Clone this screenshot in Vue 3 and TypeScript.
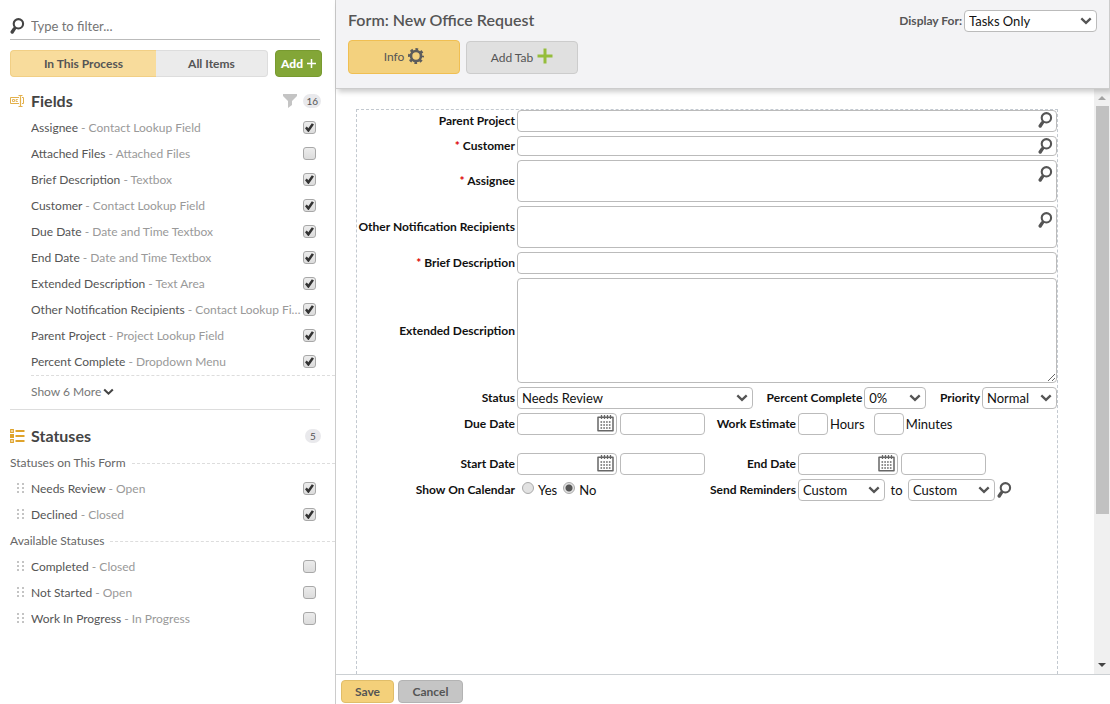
<script setup lang="ts">
import { ref, reactive } from 'vue'
import { h, type FunctionalComponent } from 'vue'

interface Item {
  name: string
  kind: string
  checked: boolean
}

const fields = reactive<Item[]>([
  { name: 'Assignee', kind: 'Contact Lookup Field', checked: true },
  { name: 'Attached Files', kind: 'Attached Files', checked: false },
  { name: 'Brief Description', kind: 'Textbox', checked: true },
  { name: 'Customer', kind: 'Contact Lookup Field', checked: true },
  { name: 'Due Date', kind: 'Date and Time Textbox', checked: true },
  { name: 'End Date', kind: 'Date and Time Textbox', checked: true },
  { name: 'Extended Description', kind: 'Text Area', checked: true },
  { name: 'Other Notification Recipients', kind: 'Contact Lookup Field', checked: true },
  { name: 'Parent Project', kind: 'Project Lookup Field', checked: true },
  { name: 'Percent Complete', kind: 'Dropdown Menu', checked: true },
])

const statusGroups = reactive<{ title: string; items: Item[] }[]>([
  {
    title: 'Statuses on This Form',
    items: [
      { name: 'Needs Review', kind: 'Open', checked: true },
      { name: 'Declined', kind: 'Closed', checked: true },
    ],
  },
  {
    title: 'Available Statuses',
    items: [
      { name: 'Completed', kind: 'Closed', checked: false },
      { name: 'Not Started', kind: 'Open', checked: false },
      { name: 'Work In Progress', kind: 'In Progress', checked: false },
    ],
  },
])

const filter = ref('')
const showOnCalendar = ref('no')

const Magnifier: FunctionalComponent = () =>
  h('svg', { width: 15, height: 16, viewBox: '0 0 15 16', fill: 'none', stroke: 'currentColor', 'aria-hidden': 'true' }, [
    h('circle', { cx: 8.4, cy: 5.8, r: 4.7, 'stroke-width': 2.1 }),
    h('path', { d: 'M5.4 9.4 4.2 10.9', 'stroke-width': 2.4 }),
    h('path', { d: 'M4.1 11.1 2.2 14', 'stroke-width': 3.4, 'stroke-linecap': 'round' }),
  ])

const Chevron: FunctionalComponent = () =>
  h('svg', { width: 12, height: 8, viewBox: '0 0 12 8', fill: 'none', stroke: 'currentColor', 'stroke-width': 2.3, 'aria-hidden': 'true' }, [
    h('path', { d: 'M1.3 1.3 6 5.8 10.7 1.3' }),
  ])

const Calendar: FunctionalComponent = () =>
  h('svg', { width: 17, height: 17, viewBox: '0 0 17 17', fill: 'none', stroke: 'currentColor', 'aria-hidden': 'true' }, [
    h('path', { d: 'M1 2.2H16V15.8H1Z', 'stroke-width': 1.5, 'stroke-linejoin': 'round' }),
    h('path', { d: 'M4.5 0V4M7.5 0V4M10.5 0V4M13.5 0V4', 'stroke-width': 1.3 }),
    h('path', { d: 'M3.5 7H14M3.5 10H14M3.5 13H14', 'stroke-width': 1.6, 'stroke-dasharray': '1.6 1.2' }),
  ])
</script>

<template>
  <div class="page">
    <aside class="side">
      <label class="search">
        <Magnifier />
        <input v-model="filter" type="text" placeholder="Type to filter..." aria-label="Type to filter" />
      </label>

      <div class="scope">
        <div class="segments">
          <button type="button" class="seg on">In This Process</button>
          <button type="button" class="seg">All Items</button>
        </div>
        <button type="button" class="add">
          Add
          <svg width="9" height="9" viewBox="0 0 9 9" stroke="#fff" stroke-width="1.5" aria-hidden="true"><path d="M4.5 0V9M0 4.5H9" /></svg>
        </button>
      </div>

      <section class="group fields">
        <header class="head">
          <svg class="headicon" width="15" height="12" viewBox="0 0 15 12" fill="none" stroke="#e3b04b" aria-hidden="true">
            <path d="M9 2.5H.5V8.5H9M12 2.5H13.5V8.5H12" />
            <path d="M8.5 .5H10L10.5 1 11 .5H12.5M10.5 1V11M8.5 11.5H10L10.5 11 11 11.5H12.5" stroke-width="1.2" />
            <path d="M2.5 4.5H4.5V6.5H2.5ZM7.8 4.5H6V6.5H7.8" stroke-width=".9" />
          </svg>
          <h2>Fields</h2>
          <svg class="funnel" width="14" height="14" viewBox="0 0 14 14" fill="#c4c4c4" aria-hidden="true"><path d="M0 0H14V2L9 7V11L5 14V7L0 2Z" /></svg>
          <span class="count">16</span>
        </header>
        <ul class="list">
          <li v-for="f in fields" :key="f.name">
            <label class="item">
              <span class="text"><b>{{ f.name }}</b> - {{ f.kind }}</span>
              <input v-model="f.checked" type="checkbox" />
            </label>
          </li>
        </ul>
        <button type="button" class="more">Show 6 More <Chevron /></button>
      </section>

      <section class="group">
        <header class="head statuses">
          <svg class="headicon" width="15" height="14" viewBox="0 0 15 14" fill="none" stroke="#dfa32b" aria-hidden="true">
            <path d="M.7 .7H3.3V3.3H.7ZM.7 10.7H3.3V13.3H.7Z" stroke-width="1.2" />
            <path d="M0 5H4V9H0Z" fill="#dfa32b" stroke="none" />
            <path d="M5.5 2H14.5M5.5 7H14.5M5.5 12H14.5" stroke-width="1.8" />
          </svg>
          <h2>Statuses</h2>
          <span class="count">5</span>
        </header>
        <template v-for="g in statusGroups" :key="g.title">
          <h3 class="sub">{{ g.title }}</h3>
          <ul class="list drag">
            <li v-for="s in g.items" :key="s.name">
              <svg class="grip" width="8" height="11" viewBox="0 0 8 11" fill="#c4c4c4" aria-hidden="true">
                <path d="M0 0H2V2H0ZM5 0H7V2H5ZM0 4H2V6H0ZM5 4H7V6H5ZM0 8H2V10H0ZM5 8H7V10H5Z" />
              </svg>
              <label class="item">
                <span class="text"><b>{{ s.name }}</b> - {{ s.kind }}</span>
                <input v-model="s.checked" type="checkbox" />
              </label>
            </li>
          </ul>
        </template>
      </section>
    </aside>

    <main class="main">
      <header class="top">
        <div class="topline">
          <h1>Form: New Office Request</h1>
          <label class="display" for="display-for">Display For:</label>
          <span class="select w-display">
            <select id="display-for"><option>Tasks Only</option></select><Chevron />
          </span>
        </div>
        <nav class="tabs">
          <button type="button" class="tab active">
            Info
            <svg width="16" height="16" viewBox="0 0 16 16" fill="none" stroke="#5c5c5c" aria-hidden="true">
              <circle cx="8" cy="8" r="6.5" stroke-width="3" stroke-dasharray="2.6 2.505" stroke-dashoffset="1.3" />
              <circle cx="8" cy="8" r="5" stroke-width="2.6" />
            </svg>
          </button>
          <button type="button" class="tab">
            Add Tab
            <svg width="16" height="16" viewBox="0 0 16 16" stroke="#95bd3c" stroke-width="3" aria-hidden="true"><path d="M8 .5V15.5M.5 8H15.5" /></svg>
          </button>
        </nav>
      </header>

      <div class="work">
        <form id="request" class="canvas" @submit.prevent>
          <div class="row">
            <label for="parent">Parent Project</label>
            <div class="lookup"><input id="parent" type="text" /><Magnifier /></div>
          </div>
          <div class="row">
            <label for="customer"><i>*</i> Customer</label>
            <div class="lookup short"><input id="customer" type="text" /><Magnifier /></div>
          </div>
          <div class="row">
            <label for="assignee"><i>*</i> Assignee</label>
            <div class="lookup tall"><textarea id="assignee"></textarea><Magnifier /></div>
          </div>
          <div class="row">
            <label for="others">Other Notification Recipients</label>
            <div class="lookup tall"><textarea id="others"></textarea><Magnifier /></div>
          </div>
          <div class="row">
            <label for="brief"><i>*</i> Brief Description</label>
            <input id="brief" type="text" />
          </div>
          <div class="row">
            <label for="extended">Extended Description</label>
            <textarea id="extended" class="big"></textarea>
          </div>
          <div class="row">
            <label for="status">Status</label>
            <div class="line spread">
              <span class="select w-status"><select id="status"><option>Needs Review</option></select><Chevron /></span>
              <span class="pair">
                <label for="percent">Percent Complete</label>
                <span class="select w-percent"><select id="percent"><option>0%</option></select><Chevron /></span>
              </span>
              <span class="pair">
                <label for="priority">Priority</label>
                <span class="select w-priority"><select id="priority"><option>Normal</option></select><Chevron /></span>
              </span>
            </div>
          </div>
          <div class="row">
            <label for="due">Due Date</label>
            <div class="line">
              <span class="date"><input id="due" type="text" /><Calendar /></span>
              <input class="time" type="text" aria-label="Due time" />
              <label class="mid" for="hours">Work Estimate</label>
              <span class="unit"><input id="hours" type="text" /><label for="hours">Hours</label></span>
              <span class="unit"><input id="minutes" type="text" /><label for="minutes">Minutes</label></span>
            </div>
          </div>
          <div class="row apart">
            <label for="start">Start Date</label>
            <div class="line">
              <span class="date"><input id="start" type="text" /><Calendar /></span>
              <input class="time" type="text" aria-label="Start time" />
              <label class="mid" for="end">End Date</label>
              <span class="date"><input id="end" type="text" /><Calendar /></span>
              <input class="time" type="text" aria-label="End time" />
            </div>
          </div>
          <div class="row">
            <span id="calendar-label" class="label">Show On Calendar</span>
            <div class="line">
              <div class="radios" role="radiogroup" aria-labelledby="calendar-label">
                <label><input v-model="showOnCalendar" type="radio" name="calendar" value="yes" />Yes</label>
                <label><input v-model="showOnCalendar" type="radio" name="calendar" value="no" />No</label>
              </div>
              <label class="mid" for="remind-from">Send Reminders</label>
              <span class="select w-remind"><select id="remind-from"><option>Custom</option></select><Chevron /></span>
              <label class="to" for="remind-to">to</label>
              <span class="select w-remind"><select id="remind-to"><option>Custom</option></select><Chevron /></span>
              <button type="button" class="find" aria-label="Look up"><Magnifier /></button>
            </div>
          </div>
        </form>
        <div class="bar" aria-hidden="true">
          <svg width="8" height="4" viewBox="0 0 8 4" fill="#a3a3a3"><path d="M0 4 4 0 8 4Z" /></svg>
          <div class="track"><div class="thumb"></div></div>
          <svg width="8" height="4" viewBox="0 0 8 4" fill="#444"><path d="M0 0H8L4 4Z" /></svg>
        </div>
      </div>

      <footer class="foot">
        <button type="submit" form="request" class="btn save">Save</button>
        <button type="button" class="btn">Cancel</button>
      </footer>
    </main>
  </div>
</template>

<style>
body {
  margin: 0;
}
</style>

<style scoped>
* {
  box-sizing: border-box;
}
.page {
  display: flex;
  height: 100vh;
  overflow: hidden;
  font: 12px/18px Lato, 'Open Sans', sans-serif;
  color: #555;
  background: #fff;
}
button,
input,
select,
textarea {
  font: inherit;
  color: inherit;
  margin: 0;
  padding: 0;
}
h1,
h2,
h3,
ul {
  margin: 0;
  padding: 0;
  list-style: none;
}
svg {
  flex: none;
}

/* Sidebar */
.side {
  flex: none;
  width: 336px;
  border-right: 1px solid #ccc;
  padding: 14px 0 0 10px;
}
.search {
  display: flex;
  align-items: center;
  gap: 6px;
  height: 26px;
  margin-right: 15px;
  padding-bottom: 1px;
  border-bottom: 1px solid #bbb;
  color: #444;
}
.search input {
  flex: 1;
  border: 0;
  outline: 0;
  background: none;
  font-size: 13px;
}
.search input::placeholder {
  color: #757575;
}
.scope {
  display: flex;
  gap: 7px;
  margin: 10px 13px 0 0;
}
.segments {
  flex: 1;
  display: flex;
}
.seg {
  flex: 112;
  height: 27px;
  border: 1px solid #ddd;
  border-left: 0;
  border-radius: 0 4px 4px 0;
  background: #ebebeb;
  font-weight: 700;
}
.seg.on {
  flex: 146;
  border: 1px solid #f1cf85;
  border-right: 0;
  border-radius: 4px 0 0 4px;
  background: #f8dc9c;
}
.add {
  width: 47px;
  display: flex;
  align-items: center;
  justify-content: center;
  gap: 4px;
  border: 1px solid #789a30;
  border-radius: 4px;
  background: #83a637;
  color: #fff;
  font-size: 12px;
  font-weight: 900;
}
.group {
  margin-right: 15px;
}
.head {
  display: flex;
  align-items: center;
  height: 28px;
  margin-top: 10px;
}
.headicon {
  margin-right: 6px;
}
.head h2 {
  flex: 1;
  font-size: 16px;
  font-weight: 700;
  color: #444;
}
.count {
  min-width: 16px;
  height: 14px;
  margin: 0 -1px 0 6px;
  padding: 0 3px;
  border-radius: 7px;
  background: #e9e9ec;
  font-size: 10px;
  line-height: 14px;
  text-align: center;
}
.list {
  padding-left: 21px;
}
.fields .list {
  margin-right: -15px;
  padding: 0;
  margin-left: 21px;
  border-bottom: 1px dashed #ddd;
}
.fields .item {
  margin-right: 15px;
}
.list li {
  display: flex;
  align-items: center;
  height: 26px;
  padding-bottom: 1px;
}
.item {
  flex: 1;
  min-width: 0;
  display: flex;
  align-items: center;
  gap: 2px;
  padding-right: 4px;
  color: #999;
}
.text {
  flex: 1;
  white-space: nowrap;
  overflow: hidden;
  text-overflow: ellipsis;
}
.text b {
  font-weight: 400;
  color: #555;
}
.item input {
  appearance: none;
  display: grid;
  place-items: center;
  flex: none;
  width: 13px;
  height: 13px;
  border: 1px solid #a8a8a8;
  border-radius: 3px;
  background: linear-gradient(#ececec, #dcdcdc);
}
.item input:checked::before {
  content: '';
  width: 9px;
  height: 9px;
  background: #333;
  clip-path: polygon(0 57%, 20% 40%, 37% 58%, 76% 4%, 100% 18%, 42% 100%, 34% 100%);
}
.more {
  display: flex;
  align-items: center;
  gap: 2px;
  width: 100%;
  height: 34px;
  padding: 0 0 2px 21px;
  border: 0;
  border-bottom: 1px solid #ddd;
  background: none;
  color: #777;
}
.more svg {
  width: 11px;
  color: #444;
}
.head.statuses {
  margin-top: 12px;
}
.sub {
  display: flex;
  align-items: center;
  gap: 6px;
  height: 26px;
  margin-right: -15px;
  font-size: 12px;
  font-weight: 400;
  color: #666;
}
.sub::after {
  content: '';
  flex: 1;
  border-top: 1px dashed #ddd;
}
.list.drag {
  padding-left: 7px;
}
.grip {
  margin-right: 6px;
}

/* Header */
.main {
  flex: 1;
  min-width: 0;
  display: flex;
  flex-direction: column;
}
.top {
  position: relative;
  flex: none;
  height: 89px;
  padding: 10px 12px 0 12px;
  border-right: 1px solid #ccc;
  border-bottom: 1px solid #ccc;
  background: #f3f3f5;
  box-shadow: 2px 3px 5px rgba(0, 0, 0, 0.2);
}
.topline {
  display: flex;
  align-items: center;
  height: 22px;
}
h1 {
  flex: 1;
  padding-bottom: 2px;
  font-size: 16px;
  font-weight: 600;
}
.display {
  margin-right: 2px;
  font-weight: 700;
}
.tabs {
  display: flex;
  align-items: flex-end;
  gap: 6px;
  margin-top: 8px;
}
.tab {
  display: flex;
  align-items: center;
  justify-content: center;
  gap: 4px;
  width: 112px;
  height: 33px;
  border: 1px solid #ccc;
  border-radius: 4px;
  background: #e0e0e0;
}
.tab.active {
  height: 34px;
  border-color: #f0bf52;
  background: #f3d17e;
}
.tab svg {
  margin-bottom: 3px;
}

/* Form */
.work {
  flex: 1;
  min-height: 0;
  display: flex;
  overflow: hidden;
}
.canvas {
  flex: 1;
  display: flex;
  flex-direction: column;
  gap: 4px;
  margin: 20px 36px 0 20px;
  border: 1px dashed #c3c9d0;
  border-bottom: 0;
  color: #111;
}
.row {
  display: grid;
  grid-template-columns: 158px minmax(0, 1fr);
  column-gap: 2px;
  align-items: center;
}
.row.apart {
  margin-top: 14px;
}
.row > label,
.label,
.pair > label,
.mid {
  font-weight: 700;
  text-align: right;
  white-space: nowrap;
}
i {
  color: #d00;
  font-style: normal;
}
.canvas input[type='text'],
textarea,
select {
  display: block;
  width: 100%;
  height: 22px;
  border: 1px solid #bbb;
  border-radius: 4px;
  background: #fff;
  outline: 0;
  font-size: 13px;
}
textarea {
  resize: none;
}
.big {
  height: 105px;
  resize: vertical;
}
.lookup,
.date,
.select {
  position: relative;
}
.lookup svg {
  position: absolute;
  top: 2px;
  right: 4px;
  color: #555;
}
.lookup.short input[type='text'] {
  height: 20px;
}
.lookup.tall textarea {
  height: 42px;
}
.lookup.tall svg {
  top: 6px;
}
.select {
  flex: none;
  color: #111;
}
.select select {
  appearance: none;
  padding-left: 4px;
}
.select svg {
  position: absolute;
  top: 7px;
  right: 5px;
  color: #555;
  pointer-events: none;
}
.w-display {
  width: 133px;
}
.w-status {
  width: 236px;
}
.w-percent {
  width: 62px;
}
.w-priority {
  width: 75px;
}
.w-remind {
  width: 87px;
}
.line {
  display: flex;
  align-items: center;
  font-size: 13px;
}
.spread {
  justify-content: space-between;
}
.pair {
  display: flex;
  align-items: center;
  gap: 2px;
  font-size: 12px;
}
.date {
  width: 100px;
  margin-right: 3px;
}
.date svg {
  position: absolute;
  top: 2px;
  right: 3px;
  color: #666;
}
.line .time[type='text'] {
  width: 85px;
}
.mid {
  width: 93px;
  padding-right: 2px;
  font-size: 12px;
}
.unit {
  display: flex;
  align-items: center;
  gap: 2px;
  margin-right: 9px;
}
.line .unit input[type='text'] {
  width: 30px;
}
.radios {
  display: flex;
  gap: 6px;
  width: 188px;
  padding-left: 5px;
}
.radios label {
  display: flex;
  gap: 4px;
}
.radios input {
  appearance: none;
  width: 12px;
  height: 12px;
  margin-top: 1px;
  border: 1px solid #aaa;
  border-radius: 50%;
  background: #e2e2e2;
}
.radios input:checked {
  background: radial-gradient(#555 0 3px, #e2e2e2 4px);
}
.to {
  width: 23px;
  text-align: center;
}
.find {
  display: flex;
  margin-left: 2px;
  border: 0;
  background: none;
  color: #555;
}

/* Scroll bar */
.bar {
  flex: none;
  width: 16px;
  display: flex;
  flex-direction: column;
  align-items: center;
  justify-content: space-between;
  padding: 7px 0;
  background: #f0f0f0;
}
.track {
  flex: 1;
  width: 13px;
  margin: 6px 0;
}
.thumb {
  height: 74%;
  background: #c1c1c1;
}

/* Footer */
.foot {
  flex: none;
  display: flex;
  gap: 4px;
  height: 30px;
  padding: 5px 5px 0;
  border-top: 1px solid #ccd0d3;
}
.btn {
  width: 65px;
  height: 23px;
  border: 1px solid #b3b3b3;
  border-radius: 4px;
  background: #c5c5c5;
  font-weight: 700;
}
.btn.save {
  width: 53px;
  border-color: #e0bd69;
  background: #f4d07a;
}
</style>
